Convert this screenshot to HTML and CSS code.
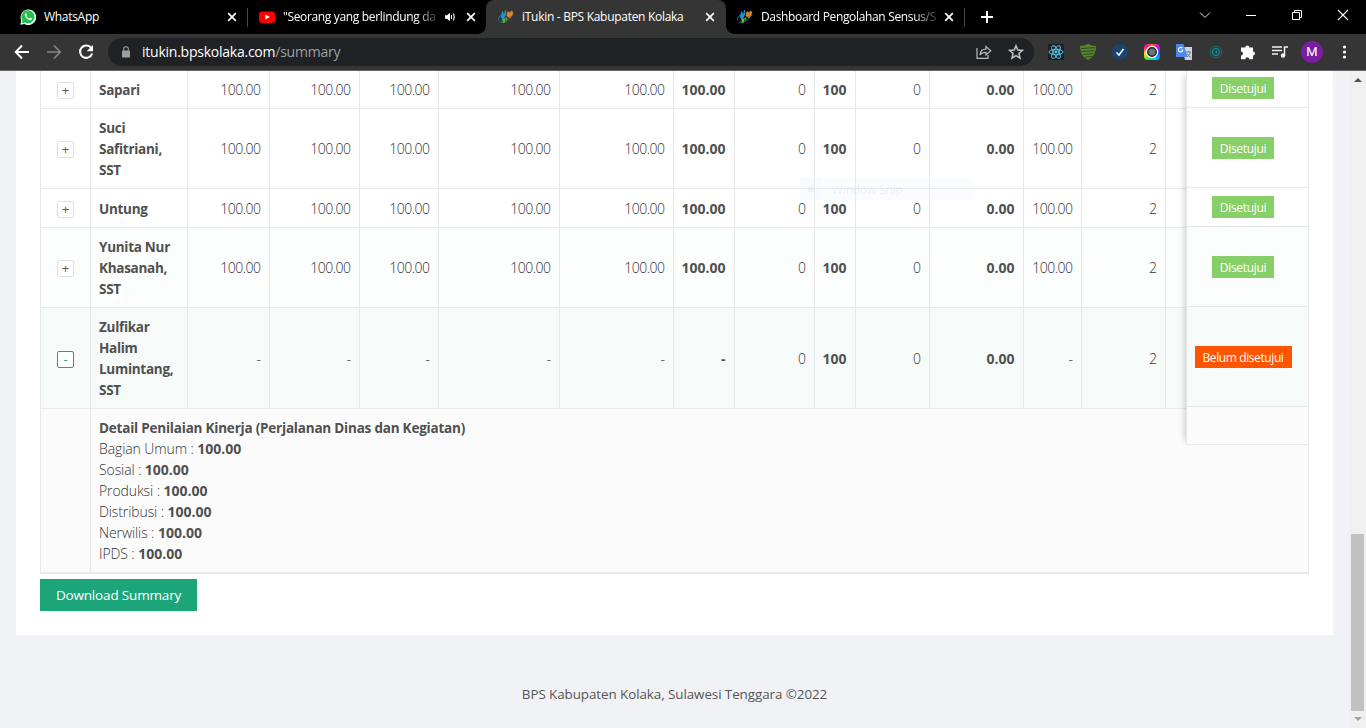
FILE: index.html
```html
<!DOCTYPE html>
<html lang="id">
<head>
<meta charset="utf-8">
<title>iTukin - BPS Kabupaten Kolaka</title>
<link rel="stylesheet" href="styles.css">
</head>
<body>
<svg width="0" height="0" class="defs">
  <symbol id="x" viewBox="0 0 10 10"><path d="M1.2 1.2l7.6 7.6M8.8 1.2L1.2 8.8" stroke="#fff" stroke-width="1.7"/></symbol>
  <symbol id="bps" viewBox="0 0 16 16">
    <path d="M3.2 6C.5 8 0 10 .8 11.500" fill="none" stroke="#1977a8" stroke-width="1"/>
    <path d="M1.500 13c3 1.500 11-2 14-8" fill="none" stroke="#266a75" stroke-width="1"/>
    <path d="M4.500 2.500L3 8l2 2 1-4zM7.500 1L6 6.500l-2 5L6 9l2-4z" fill="#2196d6" stroke="#2196d6" stroke-width=".7"/>
    <path d="M10 2.500L9 7l2 1 1-4zM13 2l-1.500 7 2.500-3 .8-3z" fill="#e98b2b" stroke="#e98b2b" stroke-width=".7"/>
    <path d="M5 10l3-1-1.500 5-2-.5zM8 8l1.500 1-1 4z" fill="#6cb52d"/>
  </symbol>
</svg>
<header class="tabs">
  <div class="tab t1"><svg class="fav" viewBox="0 0 16 16"><path d="M.3 15.700l1-4.200A7.800 7.800 0 1 1 4.500 15z" fill="#fff"/><path d="M1.600 14.400l.8-3A6.600 6.600 0 1 1 4.800 13.600z" fill="#25c04b"/><path d="M5.500 4.300c-1.200.7-1 2.500.7 4.500s4 3.100 5.300 2c.7-.7.5-1.200.4-1.400L10 8.500l-1 1.100C7.700 9.200 6.800 8.200 6.300 7l.7-.9-.8-1.900z" fill="#fff"/></svg><span class="ttl w1">WhatsApp</span><svg class="cl"><use href="#x"/></svg></div>
  <div class="tab t2"><svg class="fav" viewBox="0 0 16 16"><rect y="2.500" width="16" height="11.500" rx="3" fill="#f00"/><path d="M6.300 5.500v5L11 8z" fill="#fff"/></svg><span class="ttl w2 fade">"Seorang yang berlindung da</span><svg class="spk" viewBox="0 0 11 10"><path d="M0 3.300h2L5 .8v8.400L2 6.700H0z" fill="#fff"/><path d="M6.500 3v4M8.500 1.500q1.500 3.500 0 7" stroke="#fff" fill="none" stroke-width="1.100"/></svg><svg class="cl"><use href="#x"/></svg></div>
  <div class="tab t3"><svg class="fav"><use href="#bps"/></svg><span class="ttl w3">iTukin - BPS Kabupaten Kolaka</span><svg class="cl"><use href="#x"/></svg></div>
  <div class="tab t4"><svg class="fav"><use href="#bps"/></svg><span class="ttl w4 fade">Dashboard Pengolahan Sensus/S</span><svg class="cl"><use href="#x"/></svg></div>
  <svg class="plus" viewBox="0 0 12 12"><path d="M6 0v12M0 6h12" stroke="#fff" stroke-width="2"/></svg>
  <div class="win">
    <svg viewBox="0 0 12 12"><path d="M1 3.500l5 5 5-5" fill="none" stroke="#ddd"/></svg>
    <svg viewBox="0 0 12 12"><path d="M1 6.500h10" stroke="#fff"/></svg>
    <svg viewBox="0 0 12 12"><path d="M1.500 3.500h7v7h-7zM3.500 3.500v-2h7v7h-2" fill="none" stroke="#fff"/></svg>
    <svg viewBox="0 0 12 12"><path d="M1 1l10 10M11 1L1 11" stroke="#fff" stroke-width="1.100"/></svg>
  </div>
</header>
<nav class="bar">
  <svg class="nv" viewBox="0 0 16 16"><path d="M15 8H2M8 1.500L1.700 8 8 14.500" fill="none" stroke="#fff" stroke-width="1.900"/></svg>
  <svg class="nv" viewBox="0 0 16 16"><path d="M1 8h13M8 1.500L14.300 8 8 14.500" fill="none" stroke="#858585" stroke-width="1.700"/></svg>
  <svg class="nv" viewBox="0 0 16 16"><path d="M13.300 4A6.200 6.200 0 1 0 14.200 9.500" fill="none" stroke="#fff" stroke-width="2"/><path d="M15 1v6.300H8.700z" fill="#fff"/></svg>
  <div class="omni">
    <svg class="lock" viewBox="0 0 8 12"><rect y="4.500" width="8" height="7" rx=".8" fill="#9aa0a6"/><path d="M1.700 5V3a2.300 2.300 0 0 1 4.600 0v2" fill="none" stroke="#9aa0a6" stroke-width="1.100"/></svg>
    <span class="url">itukin.bpskolaka.com<i>/summary</i></span>
    <svg class="share" viewBox="0 0 16 16"><path d="M1 4v10.300h11V11" fill="none" stroke="#bbb" stroke-width="1.200"/><path d="M4 11c.3-4 2.500-5.800 6-5.800V2.500l4.800 4.300L10 11V8.300C7 8.200 5.300 9 4 11z" fill="none" stroke="#bbb" stroke-width="1.200"/></svg>
    <svg class="star" viewBox="0 0 16 16"><path d="M8 1.700l1.800 4.400 4.700.3-3.600 3.100 1.100 4.600L8 11.600l-4 2.500 1.100-4.600-3.600-3.100 4.700-.3z" fill="none" stroke="#c4c4c4" stroke-width="1.500"/></svg>
  </div>
  <div class="exts">
    <svg viewBox="0 0 16 16"><path fill="#202124" d="M0 0h16v16H0z"/><g fill="none" stroke="#5bcdf0" stroke-width=".9"><ellipse cx="8" cy="8" rx="7" ry="2.700"/><ellipse cx="8" cy="8" rx="7" ry="2.700" transform="rotate(60 8 8)"/><ellipse cx="8" cy="8" rx="7" ry="2.700" transform="rotate(120 8 8)"/></g><circle cx="8" cy="8" r="1.400" fill="#5bcdf0"/></svg>
    <svg viewBox="0 0 16 16"><path d="M0 2q4 0 8-2 4 2 8 2 0 10-8 14Q0 12 0 2z" fill="#55882c"/><path d="M1 4.500l14-.8M1 7.500l13.500-.8M3 10.500l10.500-.8M5 13.200l7-.8" stroke="#2f3c25" stroke-width=".9"/></svg>
    <svg viewBox="0 0 16 16"><circle cx="8" cy="8" r="7.900" fill="#1b4473"/><path d="M4.500 8.500L7 11l4.500-6" fill="none" stroke="#fff" stroke-width="1.500"/></svg>
    <div class="lens"><svg viewBox="0 0 16 16"><circle cx="8" cy="8" r="6.200" fill="#fff"/><circle cx="8" cy="8" r="4.200" fill="#6c7478" stroke="#222" stroke-width="1.500"/></svg></div>
    <svg viewBox="0 0 16 16"><path d="M6 3h10v13H9z" fill="#cfd2d6"/><path d="M10 8h5M12.500 7v1M11 13q3-2 3.300-5M11 9.500q1 2 4 4" stroke="#69818e" fill="none"/><path d="M0 0h7.500l4 13H0z" fill="#4a87ee"/><path d="M7 6H5M6.500 4.200A2.300 2.300 0 1 0 7 6.300" fill="none" stroke="#fff" stroke-width="1.100"/></svg>
    <svg viewBox="0 0 16 16"><circle cx="8" cy="8" r="5.900" fill="none" stroke="#0b6e75" stroke-width="1"/><circle cx="8" cy="8" r="3.500" fill="none" stroke="#0e8790" stroke-width="1.500"/><path d="M6.500 8L9 6.500v3z" fill="#15a0a8"/></svg>
    <svg viewBox="0 0 16 16"><path d="M1 3.500h4.300a2 2 0 1 1 4 0H13V7.500a2 2 0 1 1 0 4V15.300H9.300a2 2 0 0 0-4 0H1v-3.800a2 2 0 0 0 0-4z" fill="#fff"/></svg>
    <svg viewBox="0 0 16 16"><path d="M0 3h10M0 6.500h10M0 10h6M12.500 11.500V3H16" fill="none" stroke="#f2f2f2" stroke-width="1.500"/><circle cx="11" cy="11.500" r="2.200" fill="#f2f2f2"/></svg>
    <b class="av">M</b>
    <svg viewBox="0 0 16 16"><g fill="#fff"><circle cx="8.500" cy="3" r="1.600"/><circle cx="8.500" cy="8" r="1.600"/><circle cx="8.500" cy="13" r="1.600"/></g></svg>
  </div>
</nav>
<div class="view">
  <main class="page">
    <section class="card">
      <div class="tbl">
        <div class="row r1"><div><u>+</u></div><div>Sapari</div><div>100.00</div><div>100.00</div><div>100.00</div><div>100.00</div><div>100.00</div><div>100.00</div><div>0</div><div>100</div><div>0</div><div>0.00</div><div>100.00</div><div>2</div><div></div></div>
        <div class="row r2"><div><u>+</u></div><div>Suci<br>Safitriani,<br>SST</div><div>100.00</div><div>100.00</div><div>100.00</div><div>100.00</div><div>100.00</div><div>100.00</div><div>0</div><div>100</div><div>0</div><div>0.00</div><div>100.00</div><div>2</div><div></div></div>
        <div class="row r3"><div><u>+</u></div><div>Untung</div><div>100.00</div><div>100.00</div><div>100.00</div><div>100.00</div><div>100.00</div><div>100.00</div><div>0</div><div>100</div><div>0</div><div>0.00</div><div>100.00</div><div>2</div><div></div></div>
        <div class="row r4"><div><u>+</u></div><div>Yunita Nur<br>Khasanah,<br>SST</div><div>100.00</div><div>100.00</div><div>100.00</div><div>100.00</div><div>100.00</div><div>100.00</div><div>0</div><div>100</div><div>0</div><div>0.00</div><div>100.00</div><div>2</div><div></div></div>
        <div class="row r5"><div><u class="on">-</u></div><div>Zulfikar<br>Halim<br>Lumintang,<br>SST</div><div>-</div><div>-</div><div>-</div><div>-</div><div>-</div><div>-</div><div>0</div><div>100</div><div>0</div><div>0.00</div><div>-</div><div>2</div><div></div></div>
        <div class="detail"><div></div><div class="dt">
          <p class="h">Detail Penilaian Kinerja (Perjalanan Dinas dan Kegiatan)</p>
          <p>Bagian Umum : <b>100.00</b></p><p>Sosial : <b>100.00</b></p><p>Produksi : <b>100.00</b></p><p>Distribusi : <b>100.00</b></p><p>Nerwilis : <b>100.00</b></p><p>IPDS : <b>100.00</b></p></div></div>
        <div class="fixed">
          <div class="f1"><span>Disetujui</span></div><div class="f2"><span>Disetujui</span></div><div class="f3"><span>Disetujui</span></div><div class="f4"><span>Disetujui</span></div><div class="f5"><span class="no">Belum disetujui</span></div><div class="f6"></div>
        </div>
        <div class="snip"><em></em><span>Window Snip</span></div>
      </div>
      <button class="dl">Download Summary</button>
    </section>
    <footer>BPS Kabupaten Kolaka, Sulawesi Tenggara ©2022</footer>
  </main>
  <aside class="sb"><svg viewBox="0 0 8 4"><path d="M0 4l4-4 4 4z" fill="#505050"/></svg><div class="thumb"></div><svg viewBox="0 0 8 4"><path d="M0 0l4 4 4-4z" fill="#a3a3a3"/></svg></aside>
</div>
</body>
</html>
```
FILE: styles.css
```css
* { box-sizing: border-box; }
body { margin: 0; width: 1366px; height: 728px; overflow: hidden; font-family: "Open Sans", "Noto Sans", sans-serif; display: flex; flex-direction: column; }
svg { display: block; flex: none; }
.defs { position: absolute; }
.tabs { height: 34px; background: #000; display: flex; align-items: center; color: #fff; font-size: 12px; }
.tab { height: 34px; display: flex; align-items: center; position: relative; flex: none; }
.t1 { width: 248px; padding: 0 11px 0 20px; }
.t2 { width: 238px; padding: 0 10px 0 11px; }
.t3 { width: 240px; padding: 0 11px 0 12px; background: #353535; border-radius: 8px 8px 0 0; }
.t3::before, .t3::after { content: ""; position: absolute; bottom: 0; width: 8px; height: 8px; }
.t3::before { left: -8px; background: radial-gradient(circle at 0 0, #000 7.500px, #353535 8px); }
.t3::after { right: -8px; background: radial-gradient(circle at 100% 0, #000 7.500px, #353535 8px); }
.t4 { width: 239px; padding: 0 11px 0 11px; }
.t1::after, .t4::after { content: ""; position: absolute; right: 0; top: 8px; height: 19px; width: 1px; background: #4a4a4a; }
.fav { width: 16px; height: 16px; margin-right: 8px; }
.ttl { flex: 1; min-width: 0; white-space: nowrap; line-height: 18px; }
.t2 .ttl { flex: none; width: 154px; margin-right: 8px; }
.t4 .ttl { flex: none; width: 176px; margin-right: auto; }
.fade { -webkit-mask-image: linear-gradient(90deg, #000 86%, rgba(0,0,0,.2)); mask-image: linear-gradient(90deg, #000 86%, rgba(0,0,0,.2)); }
.w1 { letter-spacing: -.3px; }
.w2, .w4 { letter-spacing: -.34px; }
.w3 { letter-spacing: -.29px; }
.cl { width: 10px; height: 10px; }
.spk { width: 11px; height: 10px; margin-right: auto; }
.plus { width: 12px; height: 12px; margin-left: 16px; }
.win { display: flex; gap: 34px; margin: 0 17px 5px auto; }
.win svg { width: 12px; height: 12px; }
.bar { height: 37px; background: #353535; border-bottom: 1px solid #6a6668; display: flex; align-items: center; padding: 0 13px 0 14px; }
.nv { width: 16px; height: 16px; margin-right: 16px; }
.omni { width: 926px; height: 28px; border-radius: 14px; background: #202124; display: flex; align-items: center; padding: 0 10px 0 14px; margin-left: -2px; }
.lock { width: 8px; height: 12px; margin-right: 12px; }
.url { color: #fff; font-size: 14px; line-height: 20px; flex: 1; letter-spacing: -.48px; }
.url { color: #fff; font-size: 14px; line-height: 20px; flex: 1; letter-spacing: -.24px; }
.url i { font-style: normal; color: #9aa0a6; }
.share { width: 16px; height: 16px; margin-right: 16px; }
.star { width: 16px; height: 16px; }
.exts { display: flex; align-items: center; gap: 16px; margin-left: 14px; }
.exts svg, .lens { width: 16px; height: 16px; }
.lens { border-radius: 4px; background: conic-gradient(#f60, #c0f, #06f, #0cf, #3d5, #fd0, #f0a, #f60); }
.av { width: 22px; height: 22px; margin: 0 -3px; border-radius: 50%; background: #7b1fa2; color: #fff; font: 13px/22px Roboto, sans-serif; text-align: center; }
.view { height: 657px; display: flex; background: #f0f2f5; }
.page { width: 1349px; padding: 0 16px; }
.card { height: 564px; width: 1317px; background: #fff; padding: 0 24px; color: #555; font-size: 14px; }
.tbl { width: 1269px; position: relative; border-right: 1px solid #e8e8e8; border-bottom: 2px solid #e8e8e8; }
.row { display: grid; grid-template-columns: 50px 97px 82px 90px 79px 121px 114px 61px 80px 41px 74px 94px 58px 84px 143px; border-bottom: 1px solid #e8e8e8; }
.row > div { border-left: 1px solid #e8e8e8; padding: 0 8.500px 0 8px; display: flex; align-items: center; justify-content: flex-end; line-height: 21px; font-weight: 300; font-size: 14px; letter-spacing: -.5px; color: #333; }
.row > div:nth-child(1) { justify-content: center; letter-spacing: 0; padding: 2px 8px 0; }
.row > div:nth-child(2) { justify-content: flex-start; padding: 2px 8px 0; }
.row > div:nth-child(2), .row > div:nth-child(8), .row > div:nth-child(10), .row > div:nth-child(12) { font-weight: 700; font-size: 13.500px; color: #505050; letter-spacing: -.28px; }
.row > div:nth-child(8), .row > div:nth-child(10), .row > div:nth-child(12) { font-size: 14px; letter-spacing: 0; }
.r1 { height: 38px; }
.r2 { height: 80px; }
.r3 { height: 39px; }
.r4 { height: 80px; background: #fbfefd; }
.r5 { height: 101px; background: #f6faf9; }
.row u { text-decoration: none; width: 17px; height: 17px; border: 1px solid #e0e0e0; border-radius: 2px; background: #fff; font: 400 13px/14px "Open Sans", sans-serif; text-align: center; color: #555; }
.row u.on { border-color: #1da57a; color: #1da57a; }
.detail { display: grid; grid-template-columns: 50px 1fr; height: 163px; background: #fbfbfb; }
.detail > div { border-left: 1px solid #e8e8e8; padding: 9px 8px 0; }
.detail p { margin: 0; line-height: 21px; font-weight: 300; font-size: 14px; letter-spacing: -.1px; color: #333; }
.detail b, .detail .h { font-weight: 700; color: #505050; }
.detail b { letter-spacing: 0; }
.detail .h { font-size: 13.500px; letter-spacing: -.21px; margin-bottom: -1px; }
.fixed { position: absolute; top: 0; left: 1146px; width: 122px; background: #fff; border-left: 1px solid #e4e4e4; box-shadow: -6px 0 6px -4px rgba(0,0,0,.16); }
.fixed div { border-bottom: 1px solid #e8e8e8; padding: 0 17px 0 8px; display: flex; align-items: center; justify-content: center; }
.fixed span { height: 22px; width: 62px; background: #87d068; color: #fff; font-size: 12px; line-height: 23px; text-align: center; letter-spacing: -.32px; white-space: nowrap; }
.fixed .no { width: 97px; flex: none; background: #f50; letter-spacing: -.4px; }
.fixed .f1 { height: 37px; padding-bottom: 2px; }
.f2, .f4 { height: 80px; }
.fixed .f3 { height: 39px; }
.f4 { background: #fbfefd; }
.f5 { height: 100px; background: #f6faf9; }
.f6 { height: 38px; background: #fbfbfb; }
.snip { position: absolute; left: 760px; top: 107px; width: 173px; height: 22px; background: rgba(235,243,253,.22); display: flex; align-items: center; color: rgba(130,130,130,.12); font-size: 12px; letter-spacing: -.2px; }
.snip em { width: 22px; height: 22px; margin-right: 10px; background: radial-gradient(circle at 50%, rgba(230,220,220,.35) 3px, rgba(225,238,252,.15) 4px); }
.dl { display: block; width: 157px; height: 32px; margin: 5px 0 0; padding: 0; border: 0; background: #1da57a; color: #fff; font: 400 13.500px/32px "Open Sans", sans-serif; letter-spacing: -.17px; box-shadow: 0 2px 0 rgba(0,0,0,.04); }
footer { text-align: center; color: #555; font-size: 13.400px; letter-spacing: -.07px; line-height: 21px; padding-top: 49px; }
.sb { width: 17px; background: #f0f0f0; display: flex; flex-direction: column; align-items: center; padding: 7px 0; }
.sb svg { width: 8px; height: 4px; }
.thumb { width: 13px; height: 177px; margin: 452px 0 6px; background: #c1c1c1; }
```
